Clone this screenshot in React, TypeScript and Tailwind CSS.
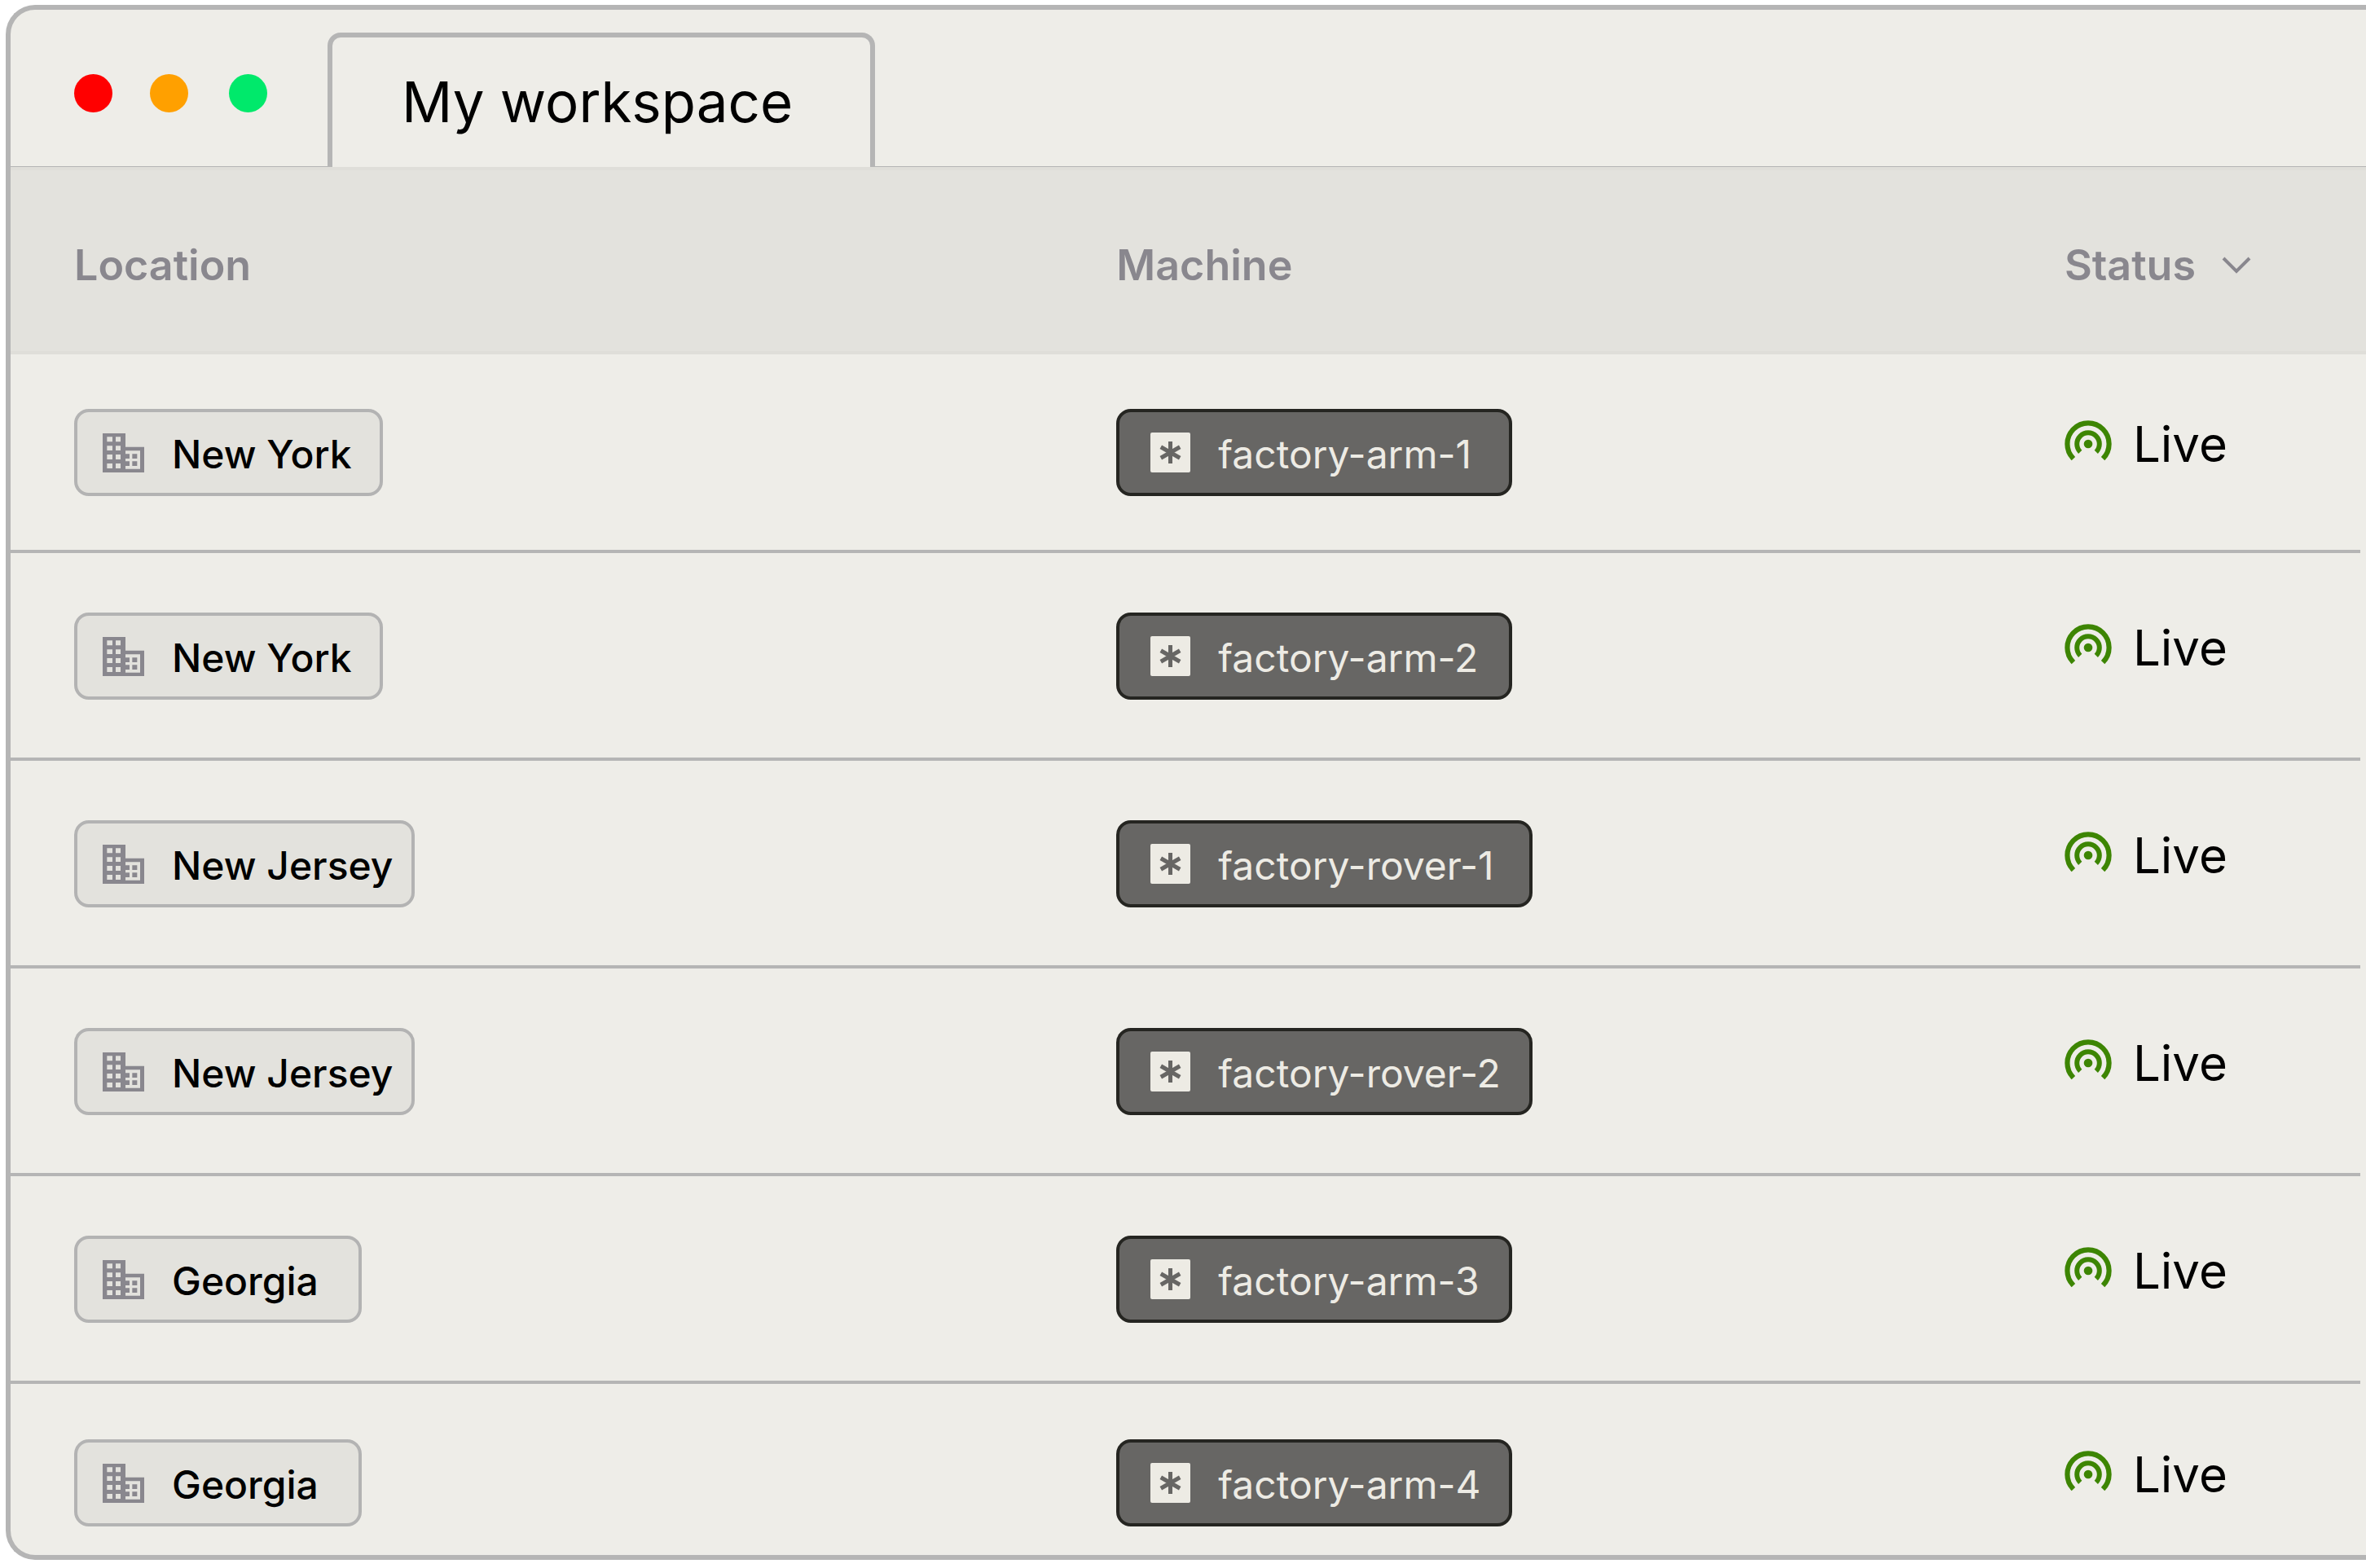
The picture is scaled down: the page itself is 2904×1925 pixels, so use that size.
import type { ReactNode } from "react";

interface Machine {
  location: string;
  machine: string;
  status: string;
}

const machines: Machine[] = [
  { location: "New York", machine: "factory-arm-1", status: "Live" },
  { location: "New York", machine: "factory-arm-2", status: "Live" },
  { location: "New Jersey", machine: "factory-rover-1", status: "Live" },
  { location: "New Jersey", machine: "factory-rover-2", status: "Live" },
  { location: "Georgia", machine: "factory-arm-3", status: "Live" },
  { location: "Georgia", machine: "factory-arm-4", status: "Live" },
];

const locationWidths: Record<string, string> = {
  "New York": "min-w-[379px]",
  "New Jersey": "min-w-[418px]",
  Georgia: "min-w-[353px]",
};

const BuildingIcon = () => (
  <svg className="w-[51px] h-12 shrink-0" viewBox="0 0 153 144" fill="currentColor" fillRule="evenodd" aria-hidden="true">
    <path d="M0 0H84V50H153V144H0ZM16 13V31H36V13ZM48 13V31H66V13ZM16 46V63H36V46ZM48 46V63H66V46ZM16 78V96H36V78ZM48 78V96H66V78ZM16 111V129H36V111ZM48 111V129H66V111ZM84 64V76H99V93H84V103H99V120H84V131H138V64Z" />
    <path d="M109 76H127V93H109ZM109 103H127V120H109Z" />
  </svg>
);

const AsteriskIcon = () => (
  <svg className="w-[49px] h-[49px] shrink-0" viewBox="0 0 49 49" aria-hidden="true">
    <rect width="49" height="49" rx="2" fill="#edebe4" />
    <path d="M24.5 11V38M12.8 17.75L36.2 31.25M12.8 31.25L36.2 17.75" stroke="#676664" strokeWidth="5" />
  </svg>
);

const LiveIcon = () => (
  <svg className="w-[58px] h-[58px] shrink-0 text-[#3d8503]" viewBox="-29 -29 58 58" fill="none" stroke="currentColor" aria-hidden="true">
    <path d="M-18.1 18.1A25.6 25.6 0 1 1 18.1 18.1" strokeWidth="6.2" />
    <path d="M-9.8 9.8A13.8 13.8 0 1 1 9.8 9.8" strokeWidth="6" />
    <circle r="5.3" fill="currentColor" stroke="none" />
  </svg>
);

const ChevronIcon = () => (
  <svg className="w-9 h-[22px]" viewBox="0 0 36 22" fill="none" stroke="currentColor" strokeWidth="4" aria-hidden="true">
    <path d="M2 2L18 18L34 2" />
  </svg>
);

function Th({ children }: { children?: ReactNode }) {
  return (
    <th
      scope="col"
      className="h-[230px] border-y-4 border-[#dfded9] bg-[#e3e2dd] pl-[78px] pt-3 text-left align-middle text-[52px] leading-[60px] font-semibold text-[#89878e]"
    >
      {children}
    </th>
  );
}

function Td({ children }: { children: ReactNode }) {
  return (
    <td className="border-b-4 border-[#b5b5b5] pl-[78px] pt-[73px] pb-[71px] align-top group-first:pt-[67px] group-first:pb-[66px] group-last:border-b-0 group-last:pt-[68px] group-last:pb-[35px]">
      {children}
    </td>
  );
}

export default function App() {
  return (
    <div className="overflow-hidden bg-white pt-1.5 pl-[7px] font-['Inter','Liberation_Sans',sans-serif] text-black">
      <main className="overflow-hidden rounded-l-[36px] border-6 border-r-0 border-[#b5b5b5] bg-[#eeede8]">
        {/* Title bar */}
        <header className="flex h-[193px] border-b border-[#b5b5b5]">
          <div className="flex items-center pt-3 pl-[78px]">
            <span className="h-[47px] w-[47px] rounded-full bg-[#ff0000]" />
            <span className="ml-[46px] h-[47px] w-[47px] rounded-full bg-[#ffa000]" />
            <span className="ml-[50px] h-[47px] w-[47px] rounded-full bg-[#00e96b]" />
          </div>
          <button
            type="button"
            className="mt-7 -mb-px ml-[74px] w-[672px] rounded-t-[16px] border-6 border-b-0 border-[#b5b5b5] bg-[#eeede8] pl-[85px] text-left text-[69px]"
          >
            My workspace
          </button>
        </header>

        {/* Machines */}
        <table className="w-full table-fixed border-separate border-spacing-0">
          <colgroup>
            <col className="w-[44.25%]" />
            <col className="w-[40.25%]" />
            <col />
            <col className="w-[7px]" />
          </colgroup>
          <thead>
            <tr>
              <Th>Location</Th>
              <Th>Machine</Th>
              <Th>
                <button type="button" className="flex items-center gap-8">
                  Status
                  <ChevronIcon />
                </button>
              </Th>
              <td className="border-y-4 border-[#dfded9] bg-[#e3e2dd]" />
            </tr>
          </thead>
          <tbody>
            {machines.map((row) => (
              <tr key={row.machine} className="group">
                <Td>
                  <div
                    className={`inline-flex h-[107px] items-center gap-[34px] rounded-[18px] border-4 border-[#b3b3b3] bg-[#e3e2dd] pl-[31px] pr-4 align-top text-[#89878e] ${locationWidths[row.location]}`}
                  >
                    <BuildingIcon />
                    <span className="pt-1 text-[48px] leading-[60px] font-medium whitespace-nowrap text-black">{row.location}</span>
                  </div>
                </Td>
                <Td>
                  <div
                    className={`inline-flex h-[107px] items-center gap-[34px] rounded-[18px] border-4 border-[#252521] bg-[#676664] pl-[38px] pr-4 align-top ${
                      row.machine.includes("rover") ? "min-w-[511px]" : "min-w-[486px]"
                    }`}
                  >
                    <AsteriskIcon />
                    <span className="pt-1 text-[48px] leading-[60px] whitespace-nowrap text-[#edebe4]">{row.machine}</span>
                  </div>
                </Td>
                <Td>
                  <div className="flex h-[86px] items-center gap-[26px] text-[60px] leading-[72px]">
                    <LiveIcon />
                    {row.status}
                  </div>
                </Td>
              </tr>
            ))}
          </tbody>
        </table>
      </main>
    </div>
  );
}
